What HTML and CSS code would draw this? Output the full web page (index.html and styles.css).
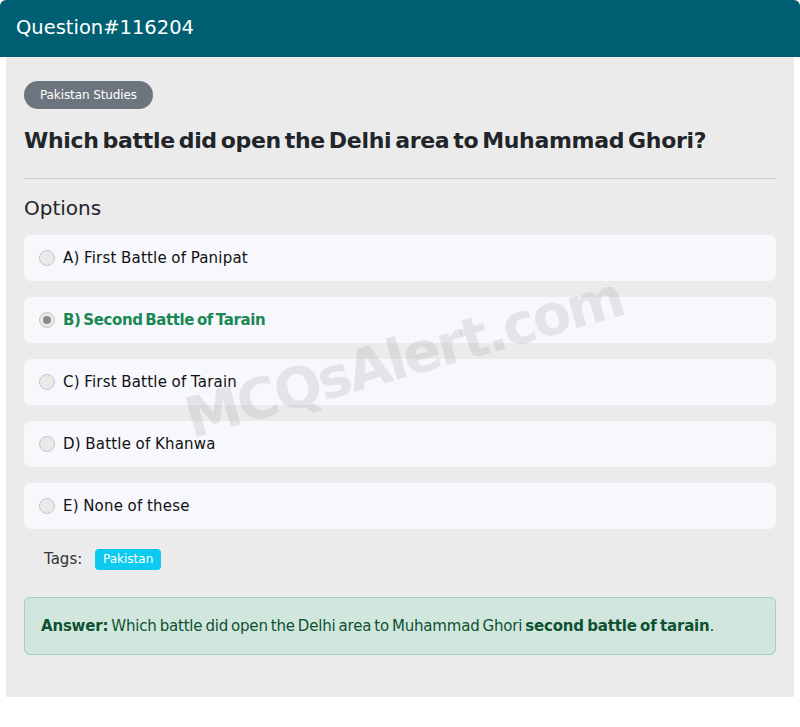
FILE: index.html
```html
<!DOCTYPE html>
<html>
<head>
<meta charset="utf-8">
<link rel="stylesheet" href="styles.css">
</head>
<body>
<div class="card">
  <div class="card-header">Question#116204</div>
  <div class="card-body">
    <span class="subject">Pakistan Studies</span>
    <h1 class="question">Which battle did open the Delhi area to Muhammad Ghori?</h1>
    <hr class="divider">
    <h2 class="options-title">Options</h2>
    <div class="options">
      <label class="option"><span class="radio"></span><span>A) First Battle of Panipat</span></label>
      <label class="option correct"><span class="radio checked"></span><span>B) Second Battle of Tarain</span></label>
      <label class="option"><span class="radio"></span><span>C) First Battle of Tarain</span></label>
      <label class="option"><span class="radio"></span><span>D) Battle of Khanwa</span></label>
      <label class="option"><span class="radio"></span><span>E) None of these</span></label>
    </div>
    <div class="tags">Tags: <span class="tag">Pakistan</span></div>
    <div class="answer"><b>Answer:</b> Which battle did open the Delhi area to Muhammad Ghori <b>second battle of tarain</b>.</div>
    <div class="watermark">MCQsAlert.com</div>
  </div>
</div>
</body>
</html>
```
FILE: styles.css
```css
* { box-sizing: border-box; }
html, body { margin: 0; padding: 0; background: #fff; }
body { font-family: "DejaVu Sans", sans-serif; color: #212529; }
.card { width: 800px; }
.card-header {
  height: 57px;
  background: #005f73;
  color: #fff;
  font-size: 19.5px;
  padding: 16px 16px 0;
  border-radius: 6px 6px 0 0;
}
.card-body {
  position: relative;
  margin: 0 6px;
  background: #ebebeb;
  height: 640px;
  padding: 24px 18px 0;
  overflow: hidden;
}
.subject {
  display: inline-block;
  height: 28px;
  line-height: 28px;
  padding: 0 16px;
  background: #6c757d;
  color: #fff;
  font-size: 12px;
  font-weight: normal;
  letter-spacing: -0.1px;
  border-radius: 14px;
}
.question {
  margin: 16px 0 0;
  font-size: 22px;
  font-weight: bold;
  line-height: 32px;
  letter-spacing: -0.3px;
  word-spacing: -3.5px;
}
.divider {
  margin: 21px 0 0;
  border: 0;
  border-top: 1px solid #ccc;
}
.options-title {
  margin: 16px 0 0;
  font-size: 20px;
  font-weight: normal;
  line-height: 26px;
}
.options {
  margin-top: 14px;
  display: flex;
  flex-direction: column;
  gap: 16px;
}
.option {
  display: flex;
  align-items: center;
  height: 46px;
  padding-left: 15px;
  background: #f7f8fc;
  border-radius: 7px;
  font-size: 15px;
  color: #111;
  letter-spacing: 0.2px;
  word-spacing: -0.5px;
}
.radio {
  width: 16px;
  height: 16px;
  border-radius: 50%;
  border: 1px solid #c6c6c6;
  background: #e9e9e9;
  margin-right: 8px;
  flex: none;
  display: flex;
  align-items: center;
  justify-content: center;
}
.radio.checked::after {
  content: "";
  width: 8px;
  height: 8px;
  border-radius: 50%;
  background: #8a8a8a;
}
.option.correct { color: #198754; font-weight: bold; letter-spacing: -0.4px; word-spacing: -2px; }
.tags {
  margin: 19px 0 0 20px;
  font-size: 15px;
  color: #333;
  line-height: 22px;
}
.tag {
  display: inline-block;
  margin-left: 8px;
  height: 21px;
  line-height: 21px;
  padding: 0 8px;
  background: #0dcaf0;
  color: #fff;
  font-size: 12px;
  font-weight: normal;
  border-radius: 4px;
  vertical-align: 1px;
}
.answer {
  margin-top: 27px;
  height: 58px;
  padding: 0 16px;
  display: flex;
  align-items: center;
  background: #d1e7dd;
  border: 1px solid #a3cfbb;
  border-radius: 6px;
  color: #0f5132;
  font-size: 15px;
  letter-spacing: -0.2px;
  word-spacing: -1.5px;
  white-space: pre;
}
.answer b { font-weight: bold; }
.watermark {
  position: absolute;
  left: 172px;
  top: 268px;
  font-size: 56px;
  font-weight: bold;
  letter-spacing: -2.5px;
  color: rgba(150, 150, 150, 0.2);
  transform: rotate(-16deg);
  pointer-events: none;
  white-space: nowrap;
}
```
